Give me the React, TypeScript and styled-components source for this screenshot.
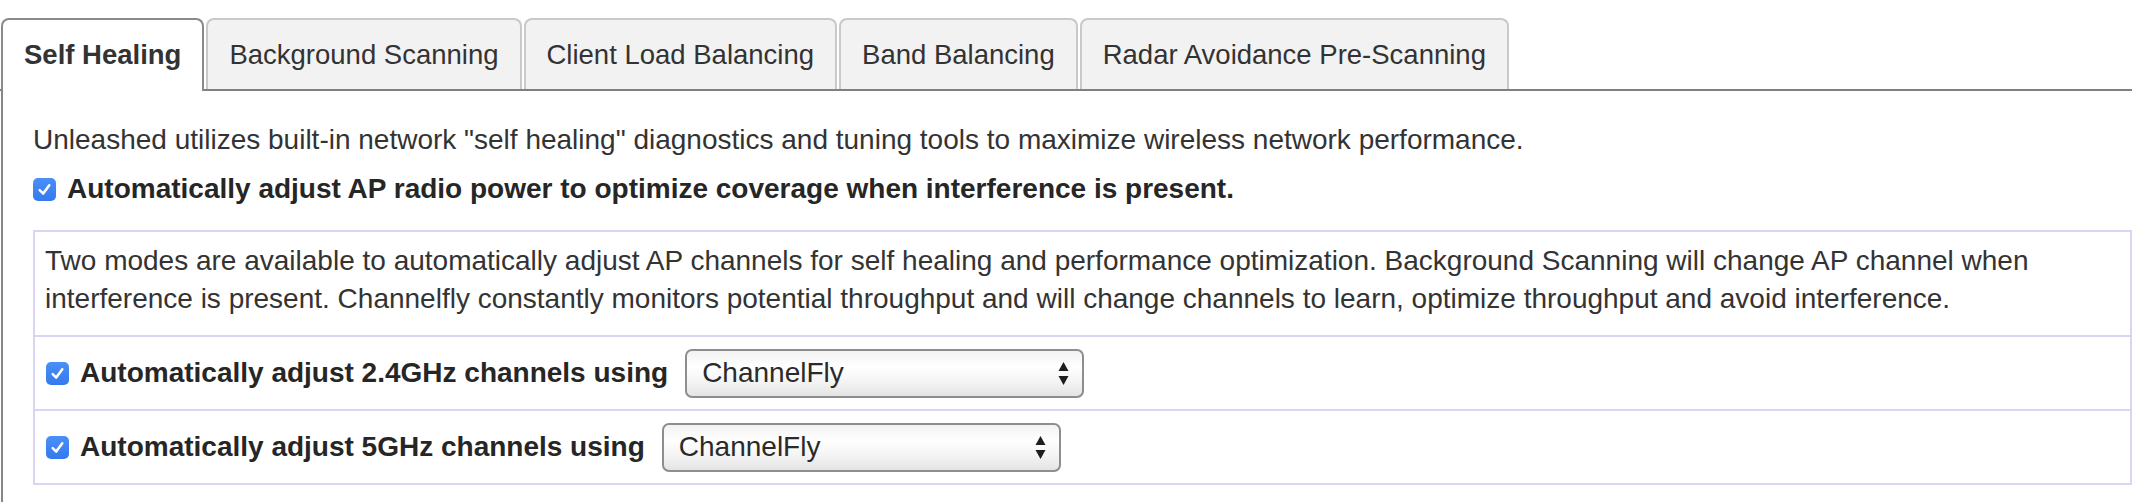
import React from 'react';
import styled, { createGlobalStyle } from 'styled-components';

const Global = createGlobalStyle`
  html, body { margin: 0; padding: 0; background: #fff; }
  body {
    font-family: "Liberation Sans", Arial, Helvetica, sans-serif;
    color: #333;
  }
`;

const Page = styled.div`
  padding: 18px 14px 0 0;
`;

const TabList = styled.div`
  display: flex;
  align-items: flex-end;
  gap: 2px;
  padding-left: 1px;
  border-bottom: 2px solid #808080;
`;

const Tab = styled.div<{ $active?: boolean }>`
  box-sizing: border-box;
  display: flex;
  align-items: center;
  height: ${p => (p.$active ? '73px' : '71px')};
  margin-bottom: ${p => (p.$active ? '-2px' : '0')};
  padding: ${p => (p.$active ? '0 21px 2px' : '0 21px')};
  font-size: 27.5px;
  font-weight: ${p => (p.$active ? 700 : 400)};
  color: #333;
  white-space: nowrap;
  background: ${p => (p.$active ? '#fff' : '#f2f2f2')};
  border: 2px solid ${p => (p.$active ? '#8a8a8a' : '#c9c9c9')};
  border-bottom: none;
  border-radius: 8px 8px 0 0;
`;

const Panel = styled.div`
  margin-left: 1px;
  border-left: 2px solid #868686;
  padding: 30px 0 20px 30px;
  font-size: 28px;
  line-height: 38px;
`;

const Intro = styled.p`
  margin: 0;
`;

const CheckLine = styled.label`
  display: flex;
  align-items: center;
  gap: 11px;
  margin-top: 11px;
  font-weight: 700;
  color: #262626;
`;

const Box = styled.div`
  margin-top: 22px;
  border: 2px solid #dad3f3;
`;

const Description = styled.div`
  padding: 10px 12px 17px 10px;
  border-bottom: 2px solid #dad3f3;
`;

const OptionRow = styled.div<{ $last?: boolean }>`
  display: flex;
  align-items: center;
  gap: 11px;
  height: 72px;
  padding-left: 11px;
  font-weight: 700;
  color: #262626;
  border-bottom: ${p => (p.$last ? 'none' : '2px solid #dad3f3')};
`;

const CheckBox = styled.span`
  flex: none;
  display: inline-flex;
  align-items: center;
  justify-content: center;
  width: 23px;
  height: 23px;
  border-radius: 5px;
  background: linear-gradient(#4b8ff8, #3479ef);
`;

const SelectBox = styled.div`
  box-sizing: border-box;
  display: flex;
  align-items: center;
  justify-content: space-between;
  width: 399px;
  height: 49px;
  margin-left: 6px;
  padding: 0 13px 0 15px;
  border: 2px solid #8e8e8e;
  border-radius: 7px;
  background: linear-gradient(#f2f2f2, #ffffff 35%, #f3f3f3 70%, #e4e4e4);
  font-weight: 400;
  color: #2a2a2a;
`;

const Check = () => (
  <CheckBox>
    <svg width="17" height="17" viewBox="0 0 16 16">
      <path d="M3.5 8.5 L6.8 11.8 L12.5 4" fill="none" stroke="#fff" strokeWidth="2.4" strokeLinecap="round" strokeLinejoin="round" />
    </svg>
  </CheckBox>
);

const Arrows = () => (
  <svg width="11" height="25" viewBox="0 0 11 25">
    <path d="M5.5 1 L10.5 10 L0.5 10 Z" fill="#1e1e1e" />
    <path d="M5.5 24 L10.5 15 L0.5 15 Z" fill="#1e1e1e" />
  </svg>
);

const tabs = ['Self Healing', 'Background Scanning', 'Client Load Balancing', 'Band Balancing', 'Radar Avoidance Pre-Scanning'];

export default function App() {
  return (
    <Page>
      <Global />
      <TabList>
        {tabs.map((t, i) => (
          <Tab key={t} $active={i === 0}>{t}</Tab>
        ))}
      </TabList>
      <Panel>
        <Intro>Unleashed utilizes built-in network "self healing" diagnostics and tuning tools to maximize wireless network performance.</Intro>
        <CheckLine>
          <Check />
          Automatically adjust AP radio power to optimize coverage when interference is present.
        </CheckLine>
        <Box>
          <Description>
            Two modes are available to automatically adjust AP channels for self healing and performance optimization. Background Scanning will change AP channel when interference is present. Channelfly constantly monitors potential throughput and will change channels to learn, optimize throughput and avoid interference.
          </Description>
          <OptionRow>
            <Check />
            Automatically adjust 2.4GHz channels using
            <SelectBox>
              ChannelFly
              <Arrows />
            </SelectBox>
          </OptionRow>
          <OptionRow $last>
            <Check />
            Automatically adjust 5GHz channels using
            <SelectBox>
              ChannelFly
              <Arrows />
            </SelectBox>
          </OptionRow>
        </Box>
      </Panel>
    </Page>
  );
}
